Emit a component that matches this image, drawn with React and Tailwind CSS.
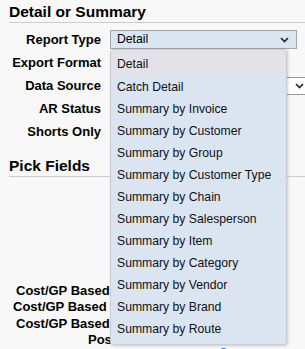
import React from 'react';

const reportTypes = [
  'Detail',
  'Catch Detail',
  'Summary by Invoice',
  'Summary by Customer',
  'Summary by Group',
  'Summary by Customer Type',
  'Summary by Chain',
  'Summary by Salesperson',
  'Summary by Item',
  'Summary by Category',
  'Summary by Vendor',
  'Summary by Brand',
  'Summary by Route',
];

const Chevron = () => (
  <svg width="9" height="6" viewBox="0 0 9 6" fill="none">
    <path d="M1 1l3.5 3.5L8 1" stroke="#222" strokeWidth="1.6" />
  </svg>
);

const Row = ({ label, children }) => (
  <div className="flex items-center h-[23px]">
    <div className="w-[92px] shrink-0 text-right text-[13px] font-bold text-black whitespace-nowrap">{label}</div>
    <div className="ml-[9px] flex-1 flex items-center">{children}</div>
  </div>
);

const App = () => {
  return (
    <div
      className="relative w-[305px] h-[349px] overflow-hidden bg-[#f8f8f8] text-black"
      style={{ fontFamily: '"Liberation Sans", Arial, sans-serif' }}
    >
      <div className="pl-[9px] pt-[3px]">
        {/* Detail or Summary */}
        <h2 className="text-[15.5px] font-bold leading-[18px] pb-[1px] border-b border-[#cccccc]">Detail or Summary</h2>

        <div className="mt-[5px]">
          <Row label="Report Type">
            <div className="w-[187px] h-[19px] flex items-center justify-between pl-[6px] pr-[7px] bg-[#dae6f2] border border-[#a6a6a6] text-[12.2px]">
              <span>Detail</span>
              <Chevron />
            </div>
          </Row>
          <Row label="Export Format" />
          <Row label="Data Source">
            <div className="w-[200px] shrink-0 h-[18px] flex items-center justify-end pr-[5px] bg-white border border-[#9a9a9a] text-[12.2px]">
              <Chevron />
            </div>
          </Row>
          <Row label="AR Status" />
          <Row label="Shorts Only" />
        </div>

        {/* Pick Fields */}
        <h2 className="mt-[14px] text-[15.5px] font-bold leading-[18px] pb-[1px] border-b border-[#cccccc]">Pick Fields</h2>

        <div className="mt-[106px] text-[13px] font-bold leading-[16px] whitespace-nowrap">
          <div className="pl-[7px]">Cost/GP Based</div>
          <div className="pl-[4px]">Cost/GP Based (</div>
          <div className="pl-[7px] mt-[1px]">Cost/GP Based</div>
          <div className="pl-[79px]">Pos</div>
          <div className="pl-[211px]">
            <div className="w-[7px] h-[7px] rounded-full bg-[#1a73d9]" />
          </div>
        </div>
      </div>

      {/* Open report type list */}
      <div className="absolute left-[110px] top-[49px] w-[177px] pb-[4px] bg-[#dae5f1] border border-[#c9cdd3] rounded-[3px] shadow-[1px_1px_3px_rgba(0,0,0,0.18)] text-[12.2px] text-[#111]">
        {reportTypes.map((t, i) => (
          <div
            key={t}
            className={
              i === 0
                ? 'h-[26px] pt-[2px] flex items-center pl-[6px] bg-[#e2e2e8]'
                : 'h-[22px] flex items-center pl-[6px]'
            }
          >
            {t}
          </div>
        ))}
      </div>
    </div>
  );
};

export default App;
